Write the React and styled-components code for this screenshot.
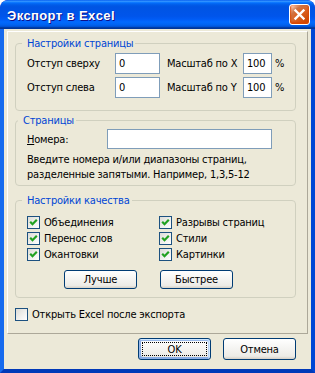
import React from 'react';
import styled, { createGlobalStyle } from 'styled-components';

const uiFont = `"DejaVu Sans Condensed", "Liberation Sans", sans-serif`;

const GlobalStyle = createGlobalStyle`
  html, body {
    margin: 0;
    padding: 0;
    background: #ffffff;
  }
  body {
    font-family: ${uiFont};
    font-size: 11px;
    letter-spacing: -0.2px;
    color: #000;
  }
`;

const Window = styled.div`
  width: 315px;
  height: 373px;
  box-sizing: border-box;
  display: flex;
  flex-direction: column;
  border-radius: 8px 8px 0 0;
  overflow: hidden;
  background: #0831d9;
`;

const TitleBar = styled.div`
  height: 29px;
  flex: none;
  display: flex;
  align-items: center;
  justify-content: space-between;
  padding: 0 5px 0 7px;
  border-radius: 8px 8px 0 0;
  background: linear-gradient(
    180deg,
    #0058ee 0%,
    #3593ff 4%,
    #288eff 6%,
    #127dff 8%,
    #036ffc 10%,
    #0262ee 14%,
    #0057e5 20%,
    #0054e3 24%,
    #0055eb 56%,
    #005bf5 66%,
    #026afe 76%,
    #0062ef 86%,
    #0052d6 92%,
    #0040ab 94%,
    #003092 100%
  );
`;

const Title = styled.span`
  font-family: "Liberation Sans", sans-serif;
  font-weight: bold;
  font-size: 13px;
  color: #fff;
  letter-spacing: 0.4px;
  text-shadow: 1px 1px #0f1089;
  margin-top: 1px;
`;

const CloseButton = styled.button`
  width: 21px;
  height: 21px;
  box-sizing: border-box;
  padding: 0;
  display: flex;
  align-items: center;
  justify-content: center;
  border: 1px solid #fff;
  border-radius: 3px;
  background: radial-gradient(
    circle at 90% 90%,
    #cc4600 0%,
    #dc6527 55%,
    #cd7546 70%,
    #ffccb2 90%,
    #fff 100%
  );
  box-shadow: inset 0 -1px 2px 1px #da4600;
`;

const Body = styled.div`
  flex: 1;
  display: flex;
  flex-direction: column;
  background: #ece9d8;
  border-style: solid;
  border-width: 0 4px 4px 4px;
  border-color: #0855dd #0046d5 #0039b8 #166aee;
  padding-bottom: 9px;
`;

const Frame = styled.div`
  margin: 2px 3px 0 3px;
  padding: 5px 11px 10px 7px;
  border: 1px solid;
  border-color: #fff #aca899 #aca899 #fff;
  display: flex;
  flex-direction: column;
`;

const Group = styled.fieldset`
  margin: ${(p) => p.$top || 0}px 0 0 0;
  padding: ${(p) => p.$pad};
  border: 1px solid #d0d0bf;
  border-radius: 4px;
  min-width: 0;
`;

const Legend = styled.legend`
  color: #0046d5;
  line-height: 13px;
  padding: 0 2px 0 5px;
  margin-left: ${(p) => p.$shift || -5}px;
`;

const SettingsGrid = styled.div`
  display: grid;
  grid-template-columns: 88px 45px 83px 29px 1fr;
  grid-auto-rows: 21px;
  row-gap: 3px;
  align-items: center;
`;

const Label = styled.span`
  padding-left: ${(p) => p.$indent || 0}px;
  white-space: nowrap;
`;

const Field = styled.div`
  box-sizing: border-box;
  width: ${(p) => p.$width}px;
  height: ${(p) => p.$height || 21}px;
  border: 1px solid #7f9db9;
  background: #fff;
  padding: 0 3px;
  display: flex;
  align-items: center;
  font-size: 11px;
`;

const NumbersRow = styled.div`
  display: flex;
  align-items: center;
  height: 20px;
`;

const NumbersLabel = styled.span`
  width: 80px;
`;

const Help = styled.p`
  margin: 3px 0 0 0;
  line-height: 15px;
  white-space: nowrap;
`;

const CheckGrid = styled.div`
  display: grid;
  grid-template-columns: 132px 1fr;
  grid-auto-rows: 16px;
`;

const CheckRow = styled.label`
  display: flex;
  align-items: flex-start;
  height: 16px;
  white-space: nowrap;
  margin-top: ${(p) => p.$top || 0}px;
`;

const Box = styled.span`
  width: 13px;
  height: 13px;
  box-sizing: border-box;
  margin-top: 1px;
  flex: none;
  border: 1px solid #1c5180;
  background: linear-gradient(135deg, #dcdcd7 0%, #fff 100%);
  display: flex;
  align-items: center;
  justify-content: center;
`;

const CheckText = styled.span`
  margin-left: 4px;
  line-height: 15px;
`;

const QualityButtons = styled.div`
  display: flex;
  gap: 23px;
  padding-left: 37px;
  margin-top: 7px;
`;

const Button = styled.button`
  box-sizing: border-box;
  width: ${(p) => p.$width || 73}px;
  height: ${(p) => p.$height || 19}px;
  padding: 0;
  font-family: ${uiFont};
  font-size: 11px;
  letter-spacing: -0.2px;
  color: #000;
  border: 1px solid #003c74;
  border-radius: 3px;
  background: linear-gradient(180deg, #fff 0%, #ecebe6 86%, #d6d0c5 100%);
  position: relative;
  ${(p) =>
    p.$default &&
    `
    box-shadow: inset -1px 1px #cee7ff, inset 1px 2px #98b8ea,
      inset -2px 2px #bcd4f6, inset 1px -1px #89ade4, inset 2px -2px #89ade4;
    &::after {
      content: '';
      position: absolute;
      inset: 3px;
      border: 1px dotted #000;
    }
  `}
`;

const Footer = styled.div`
  display: flex;
  justify-content: flex-end;
  gap: 12px;
  padding-right: 15px;
  margin-top: 4px;
`;

const Underline = styled.span`
  text-decoration: underline;
`;

const CheckMark = () => (
  <svg width="9" height="9" viewBox="0 0 9 9">
    <path d="M1.2 3.8 L3.5 6.2 L7.8 1.8" fill="none" stroke="#21a121" strokeWidth="2.2" />
  </svg>
);

const Checkbox = ({ checked, children, top }) => (
  <CheckRow $top={top}>
    <Box>{checked && <CheckMark />}</Box>
    <CheckText>{children}</CheckText>
  </CheckRow>
);

const CloseIcon = () => (
  <svg width="13" height="13" viewBox="0 0 13 13">
    <path d="M2.5 2.5 L10.5 10.5 M10.5 2.5 L2.5 10.5" stroke="#fff" strokeWidth="2.4" strokeLinecap="square" />
  </svg>
);

const App = () => {
  return (
    <>
      <GlobalStyle />
      <Window>
        <TitleBar>
          <Title>Экспорт в Excel</Title>
          <CloseButton aria-label="Закрыть">
            <CloseIcon />
          </CloseButton>
        </TitleBar>
        <Body>
          <Frame>
            <Group $pad="3px 0 12px 11px">
              <Legend>Настройки страницы</Legend>
              <SettingsGrid>
                <Label>Отступ сверху</Label>
                <Field $width={45}>0</Field>
                <Label $indent={7}>Масштаб по X</Label>
                <Field $width={29}>100</Field>
                <Label $indent={3}>%</Label>
                <Label>Отступ слева</Label>
                <Field $width={45}>0</Field>
                <Label $indent={7}>Масштаб по Y</Label>
                <Field $width={29}>100</Field>
                <Label $indent={3}>%</Label>
              </SettingsGrid>
            </Group>

            <Group $top={3} $pad="2px 0 3px 11px">
              <Legend $shift={-9}>Страницы</Legend>
              <NumbersRow>
                <NumbersLabel>
                  <Underline>Н</Underline>омера:
                </NumbersLabel>
                <Field $width={165} $height={20} />
              </NumbersRow>
              <Help>
                Введите номера и/или диапазоны страниц,
                <br />
                разделенные запятыми. Например, 1,3,5-12
              </Help>
            </Group>

            <Group $top={8} $pad="8px 0 8px 11px">
              <Legend>Настройки качества</Legend>
              <CheckGrid>
                <Checkbox checked>Объединения</Checkbox>
                <Checkbox checked>Разрывы страниц</Checkbox>
                <Checkbox checked>Перенос слов</Checkbox>
                <Checkbox checked>Стили</Checkbox>
                <Checkbox checked>Окантовки</Checkbox>
                <Checkbox checked>Картинки</Checkbox>
              </CheckGrid>
              <QualityButtons>
                <Button>Лучше</Button>
                <Button>Быстрее</Button>
              </QualityButtons>
            </Group>

            <Checkbox top={9}>Открыть Excel после экспорта</Checkbox>
          </Frame>
          <Footer>
            <Button $width={73} $height={22} $default>
              OK
            </Button>
            <Button $width={73} $height={22}>
              Отмена
            </Button>
          </Footer>
        </Body>
      </Window>
    </>
  );
};

export default App;
